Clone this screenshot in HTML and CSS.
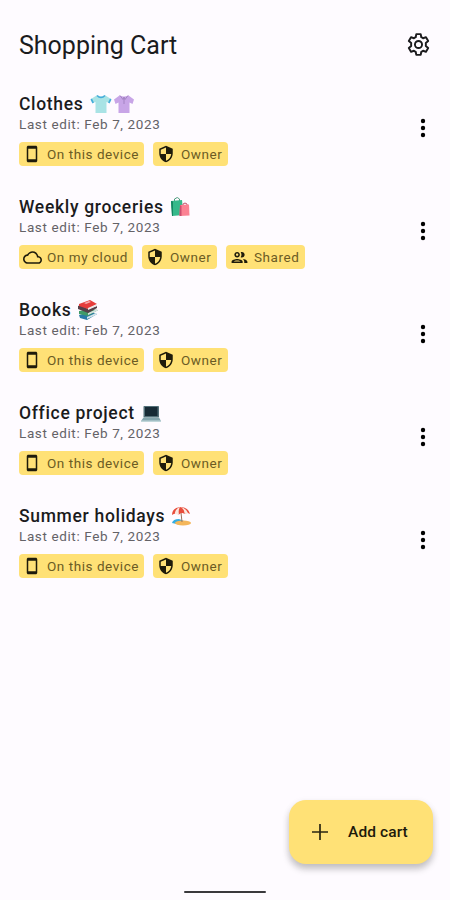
FILE: index.html
```
<!DOCTYPE html>
<html lang="en">
<head>
<meta charset="utf-8">
<title>Shopping Cart</title>
<link rel="stylesheet" href="styles.css">
</head>
<body>
<svg class="defs" aria-hidden="true">
  <symbol id="phone" viewBox="0 0 24 24"><path d="M17 1H7c-1.100 0-2 .9-2 2v18c0 1.100.9 2 2 2h10c1.100 0 2-.9 2-2V3c0-1.100-.9-2-2-2zm0 18H7V5h10v14z"/></symbol>
  <symbol id="shield" viewBox="0 0 24 24"><path d="M12 1L3 5v6c0 5.550 3.840 10.740 9 12 5.160-1.260 9-6.450 9-12V5l-9-4zm0 10.990h7c-.53 4.120-3.280 7.790-7 8.940V12H5V6.300l7-3.110v8.800z"/></symbol>
  <symbol id="cloud" viewBox="0 0 24 24"><path d="M19.350 10.040C18.670 6.590 15.640 4 12 4 9.110 4 6.600 5.640 5.350 8.040 2.340 8.360 0 10.910 0 14c0 3.310 2.690 6 6 6h13c2.760 0 5-2.240 5-5 0-2.640-2.050-4.780-4.650-4.960zM19 18H6c-2.210 0-4-1.790-4-4 0-2.050 1.530-3.760 3.560-3.970l1.070-.11.5-.95C8.080 7.140 9.940 6 12 6c2.620 0 4.880 1.860 5.390 4.430l.3 1.500 1.530.11c1.560.1 2.780 1.410 2.780 2.960 0 1.650-1.350 3-3 3z"/></symbol>
  <symbol id="people" viewBox="0 0 24 24"><path d="M9 13.750c-2.340 0-7 1.170-7 3.500V19h14v-1.750c0-2.330-4.660-3.500-7-3.500zM4.340 17c.84-.58 2.870-1.250 4.660-1.250s3.820.67 4.660 1.250H4.340zM9 12c1.930 0 3.500-1.570 3.500-3.500S10.930 5 9 5 5.500 6.570 5.500 8.500 7.070 12 9 12zm0-5c.83 0 1.500.67 1.500 1.500S9.830 10 9 10s-1.500-.67-1.500-1.500S8.170 7 9 7zm7.040 6.810c1.160.84 1.960 1.960 1.960 3.440V19h4v-1.750c0-2.020-3.500-3.170-5.960-3.440zM15 12c1.930 0 3.500-1.570 3.500-3.500S16.930 5 15 5c-.54 0-1.040.13-1.500.35.63.89 1 1.980 1 3.150s-.37 2.260-1 3.150c.46.22.96.35 1.500.35z"/></symbol>
  <symbol id="dots" viewBox="0 0 6 20"><circle cx="3" cy="3" r="2.200"/><circle cx="3" cy="10" r="2.200"/><circle cx="3" cy="17" r="2.200"/></symbol>
</svg>
<main class="screen">
  <header class="bar">
    <h1>Shopping Cart</h1>
    <svg class="gear" viewBox="0 0 24 24"><path d="M9.700 1.200h4.600l.6 3.200q1 .4 1.900 1.100l3-1.100 2.300 4-2.500 2.100q.2 1.500 0 3l2.500 2.100-2.300 4-3-1.100q-.9.7-1.900 1.100l-.6 3.200H9.700l-.6-3.200q-1-.4-1.900-1.100l-3 1.100-2.300-4 2.500-2.100q-.2-1.500 0-3L1.900 8.400l2.300-4 3 1.100q.9-.7 1.900-1.100z"/><circle cx="12" cy="12" r="3.700"/></svg>
  </header>
  <ul class="list">
    <li class="item">
      <div class="info">
        <h2><span>Clothes</span>
          <svg class="emoji shirts" viewBox="0 0 44 20">
            <path fill="#a9e3e5" d="M6.500 1.500 1 5l2 4 2.500-1V19h11V8L19 9l2-4-5.500-3.500q-4.500 3-9 0z"/>
            <path fill="none" stroke="#45add9" stroke-width="1.700" d="M7 1.500q4 4 8 0M1.200 5l2 4M20.800 5l-2 4"/>
            <path fill="#c8a5e7" d="M29.500 1.500 24 5.500l1.500 4.500 3-1.500V19h11V8.500l3 1.500 1.500-4.500-5.500-4q-4.500 2-9 0z"/>
            <path fill="none" stroke="#a383c2" d="m30 1.500 3 4 1-2.500 1 2.500 3-4M34 4v6"/>
          </svg></h2>
        <p>Last edit: Feb 7, 2023</p>
        <div class="chips"><span class="chip device"><svg><use href="#phone"/></svg>On this device</span><span class="chip owner"><svg><use href="#shield"/></svg>Owner</span></div>
      </div>
      <svg class="more"><use href="#dots"/></svg>
    </li>
    <li class="item">
      <div class="info">
        <h2><span>Weekly groceries</span>
          <svg class="emoji" viewBox="0 0 20 20">
            <path fill="none" stroke="#4e9b7d" d="M4.500 5V2q3-3 5 0v3"/>
            <path fill="#35b98a" d="m1 4 11-1 1.500 15L2 19z"/><path fill="#168661" d="m1 4 2 .5V19H2z"/>
            <path fill="none" stroke="#c14f6b" d="M13 9V7q2-2 4 0v2"/>
            <path fill="#fb8293" d="m10 8 9-.5.5 11L9.500 19z"/><path fill="#cc4e70" d="m10 8 1.500 1v10h-2z"/>
          </svg></h2>
        <p>Last edit: Feb 7, 2023</p>
        <div class="chips"><span class="chip cloud"><svg><use href="#cloud"/></svg>On my cloud</span><span class="chip owner"><svg><use href="#shield"/></svg>Owner</span><span class="chip shared"><svg><use href="#people"/></svg>Shared</span></div>
      </div>
      <svg class="more"><use href="#dots"/></svg>
    </li>
    <li class="item">
      <div class="info">
        <h2><span>Books</span>
          <svg class="emoji books" viewBox="0 0 22 20">
            <path fill="#287ba6" d="m2 15 11-3 7 2-10 6-7-2z"/><path fill="#d4e4e8" d="m10 17 9-4v2l-9 4z"/>
            <path fill="#3f9a67" d="m2 11 11-2 8 1-10 6-9-2z"/><path fill="#d8e1df" d="m11 13 9-4v2l-9 4z"/>
            <path fill="#563f48" d="m1 6 3-1 7 4 9-3v2l-9 5-10-4z"/>
            <path fill="#e63c3b" d="M2 4 13 0l7 4-9 5-9-3z"/><path fill="#eee9e9" d="m11 8 9-4v2l-9 4z"/><path fill="#f6aaaa" d="m7 3 5-2 2 1-5 2z"/>
          </svg></h2>
        <p>Last edit: Feb 7, 2023</p>
        <div class="chips"><span class="chip device"><svg><use href="#phone"/></svg>On this device</span><span class="chip owner"><svg><use href="#shield"/></svg>Owner</span></div>
      </div>
      <svg class="more"><use href="#dots"/></svg>
    </li>
    <li class="item">
      <div class="info">
        <h2><span>Office project</span>
          <svg class="emoji" viewBox="0 0 20 20">
            <rect x="2.500" y="3" width="15.500" height="11.500" rx=".7" fill="#526f78"/><rect x="4" y="4" width="12.500" height="9" fill="#172b36"/>
            <path fill="#83a5ad" d="M2.500 14.500H18l2 3.500H0z"/><path fill="#c0d6da" d="M0 17.500h20V19H0z"/>
          </svg></h2>
        <p>Last edit: Feb 7, 2023</p>
        <div class="chips"><span class="chip device"><svg><use href="#phone"/></svg>On this device</span><span class="chip owner"><svg><use href="#shield"/></svg>Owner</span></div>
      </div>
      <svg class="more"><use href="#dots"/></svg>
    </li>
    <li class="item">
      <div class="info">
        <h2><span>Summer holidays</span>
          <svg class="emoji" viewBox="0 0 20 20">
            <path fill="#35ade1" d="M1 17q1-4 7-4l5 2-3 4z"/><ellipse cx="12" cy="17" rx="8" ry="2.600" fill="#f4b65b"/>
            <path stroke="#9a725d" d="m9.500 2 1.500 14"/>
            <path fill="#e84c3c" d="M1 9Q1 2 9 1q8 0 10 7-3-2-5.500 0Q11 6 8 8.500 4 7 1 9z"/>
            <path fill="#fae8df" d="M9 1Q4 3 3.800 8L8 8.500Q7 4 9 1zm0 0q5 2 4.500 7L17 7Q15 2 9 1z"/>
          </svg></h2>
        <p>Last edit: Feb 7, 2023</p>
        <div class="chips"><span class="chip device"><svg><use href="#phone"/></svg>On this device</span><span class="chip owner"><svg><use href="#shield"/></svg>Owner</span></div>
      </div>
      <svg class="more"><use href="#dots"/></svg>
    </li>
  </ul>
  <footer>
    <button class="fab"><svg viewBox="0 0 16 16"><path d="M8 0v16M0 8h16"/></svg>Add cart</button>
    <div class="handle"></div>
  </footer>
</main>
</body>
</html>
```
FILE: styles.css
```
* { box-sizing: border-box; }
body { margin: 0; background: #fefbff; color: #1b1b1d; font-family: Roboto, "Liberation Sans", sans-serif; }
.defs { display: none; }
.screen { height: 900px; display: flex; flex-direction: column; overflow: hidden; }
.bar { height: 90px; flex: none; padding: 0 20px 0 19px; display: flex; align-items: center; justify-content: space-between; }
h1 { margin: 2px 0 0; font-size: 25px; font-weight: 400; line-height: 30px; letter-spacing: 0; }
.gear { width: 23px; height: 23px; margin-bottom: 2px; fill: none; stroke: #1b1b1d; stroke-width: 2; stroke-linejoin: round; }
.list { margin: 0; padding: 0 24px 0 19px; list-style: none; }
.item { height: 103px; display: flex; justify-content: space-between; }
.more { width: 6px; height: 20px; margin-top: 28px; }
h2 { height: 26px; margin: 0; padding-top: 1px; display: flex; align-items: center; gap: 6px; font-size: 17.500px; font-weight: 500; line-height: 26px; letter-spacing: .68px; white-space: nowrap; }
.emoji { width: 20px; height: 20px; }
.shirts { width: 44px; }
.books { width: 22px; }
.info p { margin: 0; height: 17px; font-size: 13.500px; line-height: 17px; letter-spacing: .62px; color: #646267; }
.chips { margin-top: 9px; display: flex; gap: 9px; }
.chip { height: 24px; padding-left: 4px; display: flex; align-items: center; gap: 5px; border-radius: 4px; background: #ffe176; color: #6b5b24; font-size: 13.500px; letter-spacing: .55px; white-space: nowrap; }
.chip svg { width: 19px; height: 19px; flex: none; fill: #1e1b0b; }
.device { width: 125px; }
.owner { width: 75px; }
.chip.owner svg { width: 18px; height: 18px; margin-right: 1px; }
.cloud { width: 114px; }
.shared { width: 79px; }
.device svg { width: 18px; height: 18px; margin-right: 1px; }
footer { margin-top: auto; height: 100px; display: flex; flex-direction: column; align-items: center; }
.fab { width: 144px; height: 64px; margin: 0 17px 0 0; padding: 0 0 0 23px; align-self: flex-end; display: flex; align-items: center; gap: 20px; border: 0; border-radius: 17px; background: #ffe176; color: #1d1a0b; font: 500 15.500px Roboto, sans-serif; letter-spacing: .1px; box-shadow: 0 5px 7px rgba(0,0,0,.22), 0 2px 8px rgba(0,0,0,.05); }
.fab svg { width: 16px; height: 16px; fill: none; stroke: #2a2612; stroke-width: 1.700; }
.handle { width: 82px; height: 2px; margin-top: 27px; border-radius: 1px; background: #3a393c; }
```
